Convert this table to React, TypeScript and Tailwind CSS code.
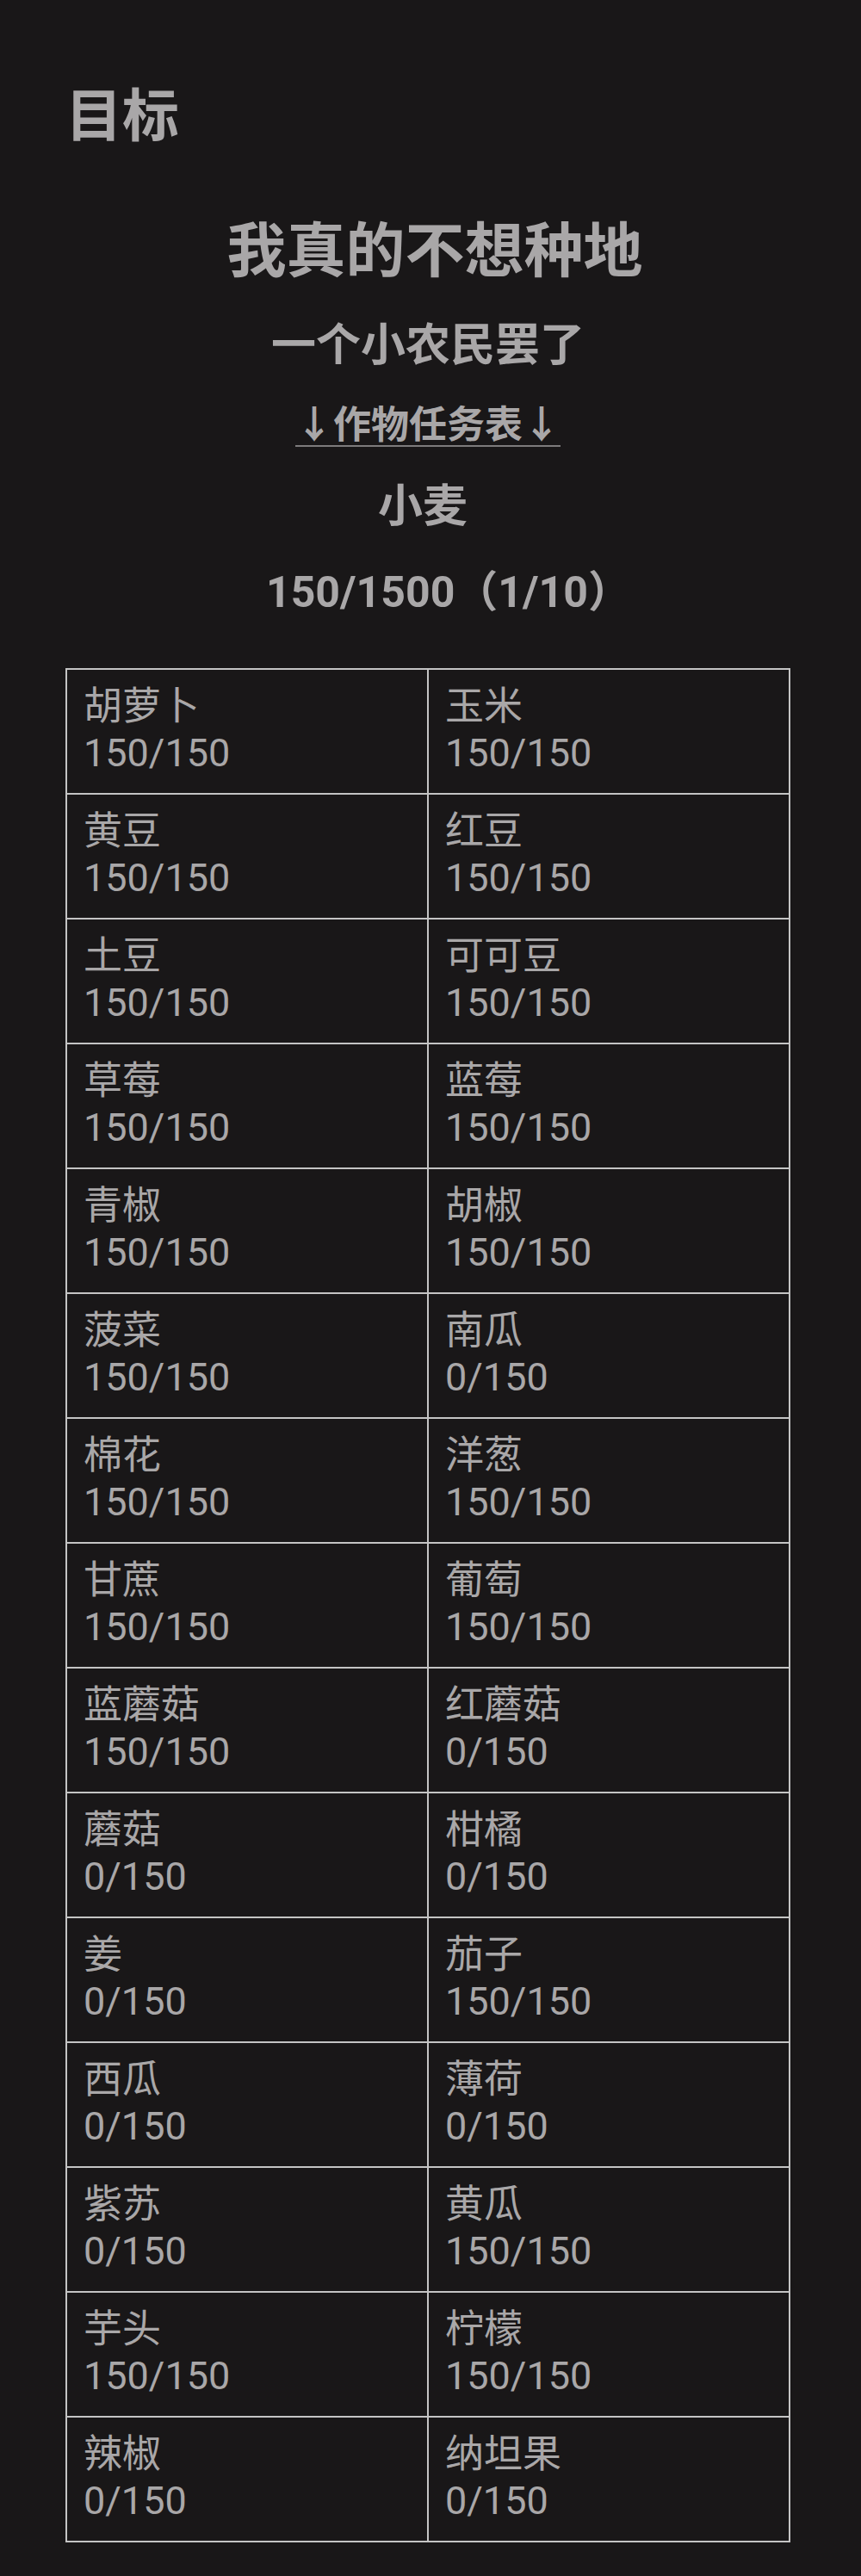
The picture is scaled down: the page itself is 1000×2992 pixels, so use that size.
const crops: [string, string][] = [
  ['胡萝卜', '150/150'],
  ['玉米', '150/150'],
  ['黄豆', '150/150'],
  ['红豆', '150/150'],
  ['土豆', '150/150'],
  ['可可豆', '150/150'],
  ['草莓', '150/150'],
  ['蓝莓', '150/150'],
  ['青椒', '150/150'],
  ['胡椒', '150/150'],
  ['菠菜', '150/150'],
  ['南瓜', '0/150'],
  ['棉花', '150/150'],
  ['洋葱', '150/150'],
  ['甘蔗', '150/150'],
  ['葡萄', '150/150'],
  ['蓝蘑菇', '150/150'],
  ['红蘑菇', '0/150'],
  ['蘑菇', '0/150'],
  ['柑橘', '0/150'],
  ['姜', '0/150'],
  ['茄子', '150/150'],
  ['西瓜', '0/150'],
  ['薄荷', '0/150'],
  ['紫苏', '0/150'],
  ['黄瓜', '150/150'],
  ['芋头', '150/150'],
  ['柠檬', '150/150'],
  ['辣椒', '0/150'],
  ['纳坦果', '0/150'],
];

export default function App() {
  return (
    <div
      className="min-h-screen bg-[#191718] text-[#a9a7a8] pl-[76px] pr-[82px] pt-[96px] pb-[40px]"
      style={{ fontFamily: 'Roboto, "Noto Sans CJK SC", sans-serif' }}
    >
      <h1 className="text-[66px] leading-[80px] font-bold">目标</h1>

      <div className="flex flex-col items-center font-bold">
        <h2 className="mt-[75px] pl-[16px] text-[69px] leading-[84px]">我真的不想种地</h2>
        <p className="mt-[36px] text-[52px] leading-[62px]">一个小农民罢了</p>
        <div className="mt-[36px] h-[52px] flex items-center">
          <span className="inline-block text-[44px] leading-[46px] border-b-2 border-[#7d7b7c]">
            ↓作物任务表↓
          </span>
        </div>
        <p className="mt-[37px] pr-[12px] text-[52px] leading-[62px]">小麦</p>
        <p className="mt-[38px] pl-[48px] text-[50px] leading-[60px]">150/1500（1/10）</p>
      </div>

      <div className="mt-[58px] grid grid-cols-2 border-l-2 border-t-2 border-[#c4c4c4]">
        {crops.map(([name, count]) => (
          <div
            key={name}
            className="border-r-2 border-b-2 border-[#c4c4c4] pl-[19px] pt-[16px] pb-[19px] text-[45px] leading-[54px]"
          >
            <div>{name}</div>
            <div>{count}</div>
          </div>
        ))}
      </div>
    </div>
  );
}
